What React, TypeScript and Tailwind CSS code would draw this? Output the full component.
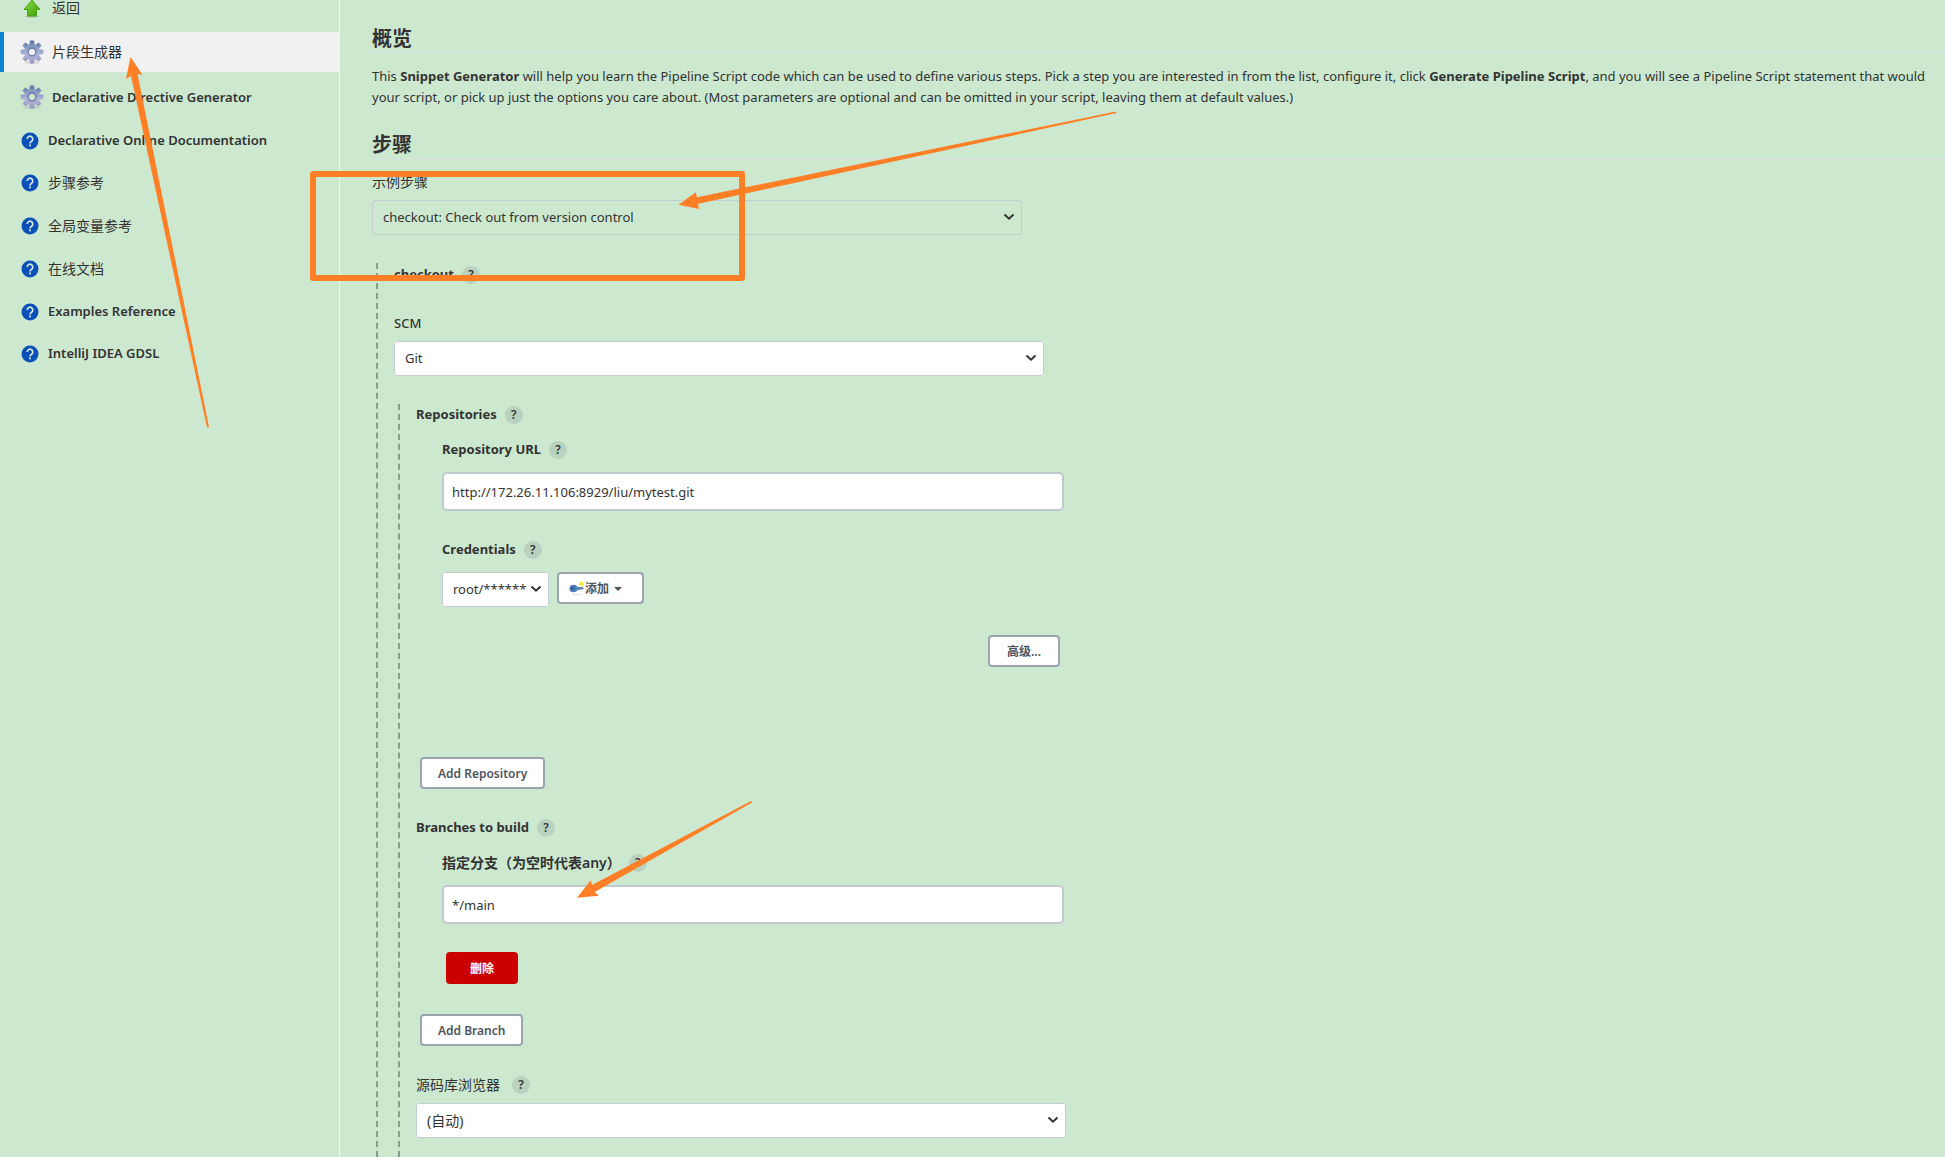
import { useId, type ReactNode } from 'react'

function UpArrowIcon() {
  return (
    <svg width="18" height="19" viewBox="0 0 18 19" className="shrink-0" aria-hidden="true">
      <defs>
        <linearGradient id="up" x1="0" y1="0" x2="1" y2="1">
          <stop offset="0" stopColor="#8be04a" />
          <stop offset="1" stopColor="#3c9a05" />
        </linearGradient>
      </defs>
      <ellipse cx="9" cy="17.5" rx="7" ry="1.2" fill="#7f9a7d" opacity=".5" />
      <path d="M9 1 17 10.5H13.5V17H4.5V10.5H1Z" fill="url(#up)" stroke="#4aa513" strokeWidth="1" strokeLinejoin="round" />
    </svg>
  )
}

const TEETH = [0, 45, 90, 135, 180, 225, 270, 315]

function GearIcon() {
  return (
    <svg width="24" height="24" viewBox="0 0 24 24" className="shrink-0" aria-hidden="true">
      <defs>
        <linearGradient id="gear" gradientUnits="userSpaceOnUse" x1="12" y1="0" x2="12" y2="24">
          <stop offset="0" stopColor="#54719c" />
          <stop offset=".3" stopColor="#8197bf" />
          <stop offset=".6" stopColor="#acb0d4" />
          <stop offset="1" stopColor="#9a94c0" />
        </linearGradient>
        <mask id="gearHole">
          <rect width="24" height="24" fill="#fff" />
          <circle cx="12" cy="12" r="3" fill="#000" />
        </mask>
        <clipPath id="gearShape">
          {TEETH.map((a) => (
            <path key={a} d="M9 6 10 .6H14L15 6Z" transform={`rotate(${a} 12 12)`} />
          ))}
          <circle cx="12" cy="12" r="7.6" />
        </clipPath>
      </defs>
      <ellipse cx="12" cy="22.5" rx="8" ry="1.2" fill="#6f7785" opacity=".25" />
      <g mask="url(#gearHole)">
        <rect width="24" height="24" fill="url(#gear)" clipPath="url(#gearShape)" />
        <circle cx="12" cy="12" r="6.8" fill="none" stroke="#c5cbe4" strokeWidth=".8" opacity=".5" />
        <circle cx="12" cy="12" r="3.8" fill="none" stroke="#7583ad" strokeWidth="1.4" />
      </g>
    </svg>
  )
}

function HelpDiscIcon() {
  return (
    <svg width="18" height="18" viewBox="0 0 24 24" className="shrink-0" aria-hidden="true">
      <circle cx="12" cy="12" r="11.3" fill="#0b4fb8" />
      <path d="M8.300 9.300a3.700 3.700 0 1 1 5.900 3c-1.300.9-2.200 1.500-2.200 3" fill="none" stroke="#d6ecdf" strokeWidth="2.2" />
      <rect x="10.8" y="16.7" width="2.4" height="2.4" fill="#d6ecdf" />
    </svg>
  )
}

function KeyIcon() {
  return (
    <svg width="16" height="16" viewBox="0 0 16 16" className="shrink-0" aria-hidden="true">
      <ellipse cx="8" cy="13.5" rx="5.5" ry=".8" fill="#e4e4e4" />
      <circle cx="12.5" cy="3" r="2.6" fill="#fbf36a" />
      <circle cx="12.5" cy="3" r="1.2" fill="#f5e800" />
      <ellipse cx="4.5" cy="7.5" rx="4" ry="3.8" fill="#4a79b5" />
      <circle cx="3.2" cy="7.5" r="1.2" fill="#2c5489" />
      <path d="M7 5.8 14 6.2 15 7.2 14 8.3 13 7.9 12.3 8.9 11.3 8.2 10.3 9 7 9.2Z" fill="#5583bd" />
    </svg>
  )
}

function Help() {
  return (
    <button type="button" aria-label="Help" className="flex size-[18px] shrink-0 items-center justify-center rounded-full bg-[#b9d2bf] text-xs font-semibold">
      ?
    </button>
  )
}

type NavItem = { label: string; icon: ReactNode; kind: 'gear' | 'gearLatin' | 'cjk' | 'latin'; active?: boolean }

const NAV: NavItem[] = [
  { label: '片段生成器', icon: <GearIcon />, kind: 'gear', active: true },
  { label: 'Declarative Directive Generator', icon: <GearIcon />, kind: 'gearLatin' },
  { label: 'Declarative Online Documentation', icon: <HelpDiscIcon />, kind: 'latin' },
  { label: '步骤参考', icon: <HelpDiscIcon />, kind: 'cjk' },
  { label: '全局变量参考', icon: <HelpDiscIcon />, kind: 'cjk' },
  { label: '在线文档', icon: <HelpDiscIcon />, kind: 'cjk' },
  { label: 'Examples Reference', icon: <HelpDiscIcon />, kind: 'latin' },
  { label: 'IntelliJ IDEA GDSL', icon: <HelpDiscIcon />, kind: 'latin' },
]

const ROW = {
  gear: 'h-10 gap-2 pl-4',
  gearLatin: 'h-10 gap-2 pl-4 text-[13px] font-semibold',
  cjk: 'h-[38px] gap-[9px] pl-[17px]',
  latin: 'h-[37px] gap-[9px] pl-[17px] text-[13px] font-semibold',
}

function Sidebar() {
  return (
    <nav className="w-[340px] shrink-0 border-r border-[#f0f7f0] text-sm">
      <a href="#back" className="flex h-4 items-center gap-[11px] pl-[23px] leading-4">
        <UpArrowIcon />
        返回
      </a>
      <ul className="mt-4 flex flex-col gap-[5px]">
        {NAV.map((n) => (
          <li key={n.label}>
            <a
              href="#item"
              aria-current={n.active ? 'page' : undefined}
              className={`flex items-center border-l-4 ${ROW[n.kind]} ${n.active ? 'border-[#0b85d1] bg-[#f1f1f1]' : 'border-transparent'}`}
            >
              {n.icon}
              {n.label}
            </a>
          </li>
        ))}
      </ul>
    </nav>
  )
}

function SelectBox({ id, value, className }: { id: string; value: string; className: string }) {
  return (
    <div className={`relative rounded-[3px] ${className}`}>
      <select id={id} className="block h-[35px] w-full appearance-none rounded-[3px] border border-[#c3ccd3] pt-px pr-5 pl-[10px]">
        <option>{value}</option>
      </select>
      <svg width="12" height="8" viewBox="0 0 12 8" className="pointer-events-none absolute top-[13px] right-[7px]" aria-hidden="true">
        <path d="M1.5 1.5 6 5.700 10.500 1.500" fill="none" stroke="#333" strokeWidth="2" />
      </svg>
    </div>
  )
}

function TextField({ label, value, labelClass }: { label: string; value: string; labelClass: string }) {
  const id = useId()
  return (
    <div>
      <div className="flex h-[18px] items-center gap-2">
        <label htmlFor={id} className={labelClass}>
          {label}
        </label>
        <Help />
      </div>
      <input
        id={id}
        defaultValue={value}
        className="mt-[13px] block h-[39px] w-[622px] rounded-[5px] border-2 border-[#c0c8d0] bg-white px-2"
      />
    </div>
  )
}

function Button({ children, className = '' }: { children: ReactNode; className?: string }) {
  return (
    <button
      type="button"
      className={`flex h-8 items-center rounded border-2 border-[#98a4b0] bg-white pt-px text-xs font-semibold text-[#4d545d] ${className}`}
    >
      {children}
    </button>
  )
}

function Annotations() {
  return (
    <>
      <div className="pointer-events-none absolute top-[171px] left-[310px] h-[110px] w-[435px] rounded-[3px] border-6 border-[#ff7f27]" />
      <svg width="1200" height="920" viewBox="0 0 1200 920" className="pointer-events-none absolute top-0 left-0" fill="#ff7f27" aria-hidden="true">
        <path d="M130.500 57 142.500 75 137.500 74 209 427 207 427.500 131 76 126 79Z" />
        <path d="M678.500 204.700 695.700 192.300 697 197.300 1116 111.500 1116.500 113 697.700 204 699.300 209Z" />
        <path d="M577 897.700 590.700 880.300 592 885 751 801 752 802.500 594.700 892 598.700 895.700Z" />
      </svg>
    </>
  )
}

export default function App() {
  return (
    <div className="relative flex min-h-screen overflow-hidden bg-[#cce8cf] font-['Noto_Sans','Noto_Sans_CJK_SC',sans-serif] text-[13px] text-[#333]">
      <Sidebar />
      <main className="flex min-w-0 flex-1 flex-col pt-6 pl-8">
        <h1 className="h-[29px] border-b border-[#dcdfe0] text-xl leading-[30px] font-bold">概览</h1>
        <p className="mt-[13px] leading-[21px] whitespace-nowrap">
          This <b>Snippet Generator</b> will help you learn the Pipeline Script code which can be used to define various
          steps. Pick a step you are interested in from the list, configure it, click <b>Generate Pipeline Script</b>,
          and you will see a Pipeline Script statement that would
          <br />
          your script, or pick up just the options you care about. (Most parameters are optional and can be omitted in
          your script, leaving them at default values.)
        </p>
        <h2 className="mt-[22px] h-[29px] border-b border-[#dcdfe0] text-xl leading-[30px] font-bold">步骤</h2>
        <label htmlFor="step" className="mt-[13px] text-sm">
          示例步骤
        </label>
        <SelectBox id="step" value="checkout: Check out from version control" className="mt-2 w-[650px]" />

        <section className="mt-7 ml-1 flex flex-1 flex-col border-l-2 border-dashed border-[#8a9e8d] pl-4">
          <div className="mt-[3px] flex h-[18px] items-center gap-2 font-bold">
            checkout
            <Help />
          </div>
          <label htmlFor="scm" className="mt-[29px] leading-5 font-medium">
            SCM
          </label>
          <SelectBox id="scm" value="Git" className="mt-2 w-[650px] bg-white" />

          <section className="mt-7 ml-1 flex flex-1 flex-col border-l-2 border-dashed border-[#8a9e8d] pb-[19px] pl-4">
            <div className="mt-[2px] flex h-[18px] items-center gap-2 font-bold">
              Repositories
              <Help />
            </div>
            <div className="mt-[17px] ml-[26px] w-[622px]">
              <TextField label="Repository URL" value="http://172.26.11.106:8929/liu/mytest.git" labelClass="font-bold" />
              <div className="mt-[30px] flex h-[18px] items-center gap-2 font-bold">
                <label htmlFor="cred">Credentials</label>
                <Help />
              </div>
              <div className="mt-[13px] flex items-start gap-2">
                <SelectBox id="cred" value="root/******" className="w-[107px] bg-white" />
                <Button className="w-[87px] pl-[10px]">
                  <KeyIcon />
                  添加
                  <span className="ml-[5px] border-x-4 border-t-4 border-x-transparent border-t-[#4d545d]" />
                </Button>
              </div>
              <div className="mt-7 mr-1 flex justify-end">
                <Button className="px-[17px]">高级...</Button>
              </div>
            </div>
            <div className="mt-[90px] ml-1 flex">
              <Button className="px-4">Add Repository</Button>
            </div>

            <div className="mt-[30px] flex h-[18px] items-center gap-2 font-bold">
              Branches to build
              <Help />
            </div>
            <div className="mt-[17px] ml-[26px]">
              <TextField label="指定分支（为空时代表any）" value="*/main" labelClass="text-sm font-semibold" />
              <button type="button" className="mt-7 ml-1 block h-8 w-[72px] rounded bg-[#cc0003] pt-px text-xs font-bold text-white">
                删除
              </button>
            </div>
            <div className="mt-[30px] ml-1 flex">
              <Button className="px-4">Add Branch</Button>
            </div>

            <div className="mt-[30px] flex h-[18px] items-center gap-3">
              <label htmlFor="browser" className="text-sm">
                源码库浏览器
              </label>
              <Help />
            </div>
            <SelectBox id="browser" value="(自动)" className="mt-[9px] w-[650px] bg-white text-sm" />
          </section>
        </section>
      </main>
      <Annotations />
    </div>
  )
}
